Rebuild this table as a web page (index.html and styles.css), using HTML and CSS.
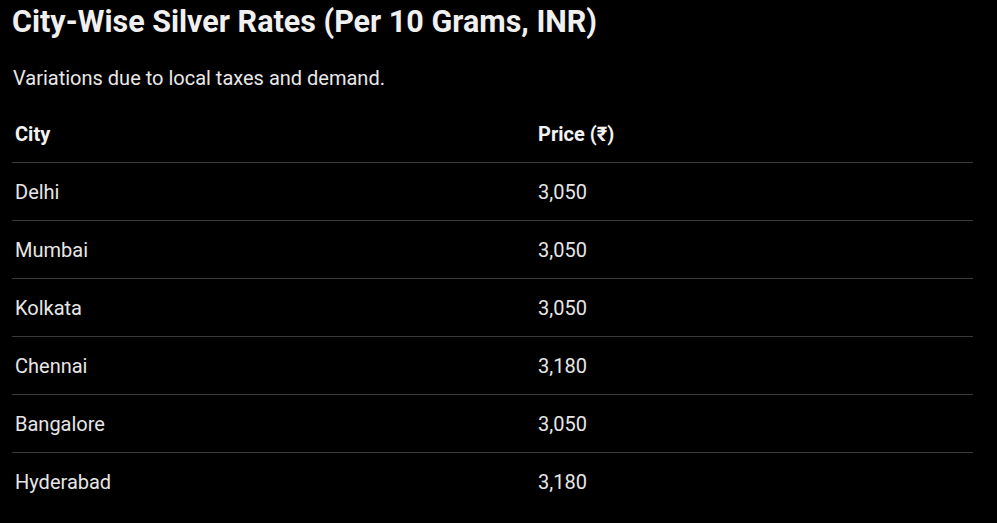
FILE: index.html
```html
<!DOCTYPE html>
<html>
<head>
<meta charset="utf-8">
<link rel="stylesheet" href="styles.css">
</head>
<body>
<main class="page">
  <h2 class="title">City-Wise Silver Rates (Per 10 Grams, INR)</h2>
  <p class="sub">Variations due to local taxes and demand.</p>
  <table class="rates">
    <thead>
      <tr><th class="c1">City</th><th>Price (₹)</th></tr>
    </thead>
    <tbody>
      <tr><td class="c1">Delhi</td><td>3,050</td></tr>
      <tr><td class="c1">Mumbai</td><td>3,050</td></tr>
      <tr><td class="c1">Kolkata</td><td>3,050</td></tr>
      <tr><td class="c1">Chennai</td><td>3,180</td></tr>
      <tr><td class="c1">Bangalore</td><td>3,050</td></tr>
      <tr><td class="c1">Hyderabad</td><td>3,180</td></tr>
    </tbody>
  </table>
</main>
</body>
</html>
```
FILE: styles.css
```css
html, body {
  margin: 0;
  background: #000;
  color: #ececec;
  font-family: Roboto, "Liberation Sans", sans-serif;
}
.page {
  padding: 0 24px 0 12px;
}
.title {
  margin: 0;
  padding-top: 3px;
  font-size: 30.5px;
  line-height: 38px;
  font-weight: 700;
  color: #f0f0f0;
}
.sub {
  margin: 24px 0 0 1px;
  font-size: 20px;
  line-height: 26px;
  color: #e8e8e8;
}
.rates {
  width: 961px;
  border-collapse: collapse;
  margin-top: 14px;
}
.rates th, .rates td {
  text-align: left;
  font-size: 20px;
  padding: 0 3px;
  height: 57px;
  border-bottom: 1px solid #3a3a3a;
}
.rates th {
  font-weight: 700;
  color: #f2f2f2;
}
.rates td { color: #e6e6e6; }
.rates tbody tr:last-child td { border-bottom: none; }
.rates .c1 { width: 517px; }
```
